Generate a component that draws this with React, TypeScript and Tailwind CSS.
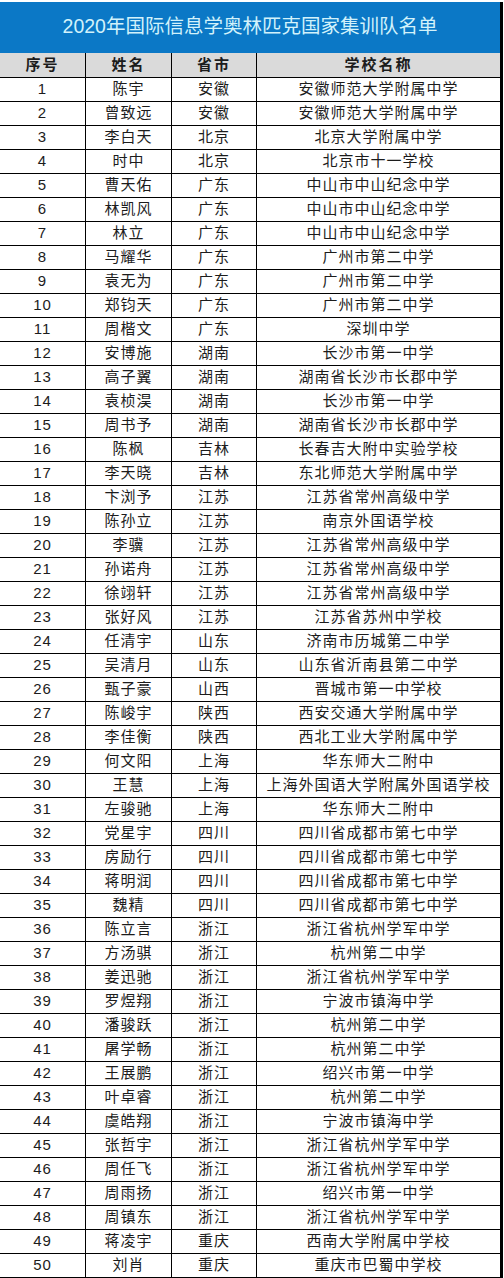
import type React from 'react'

// Roster rows: [no, name, province, school]
const ROWS: [number, string, string, string][] = [
	[1, '陈宇', '安徽', '安徽师范大学附属中学'],
	[2, '曾致远', '安徽', '安徽师范大学附属中学'],
	[3, '李白天', '北京', '北京大学附属中学'],
	[4, '时中', '北京', '北京市十一学校'],
	[5, '曹天佑', '广东', '中山市中山纪念中学'],
	[6, '林凯风', '广东', '中山市中山纪念中学'],
	[7, '林立', '广东', '中山市中山纪念中学'],
	[8, '马耀华', '广东', '广州市第二中学'],
	[9, '袁无为', '广东', '广州市第二中学'],
	[10, '郑钧天', '广东', '广州市第二中学'],
	[11, '周楷文', '广东', '深圳中学'],
	[12, '安博施', '湖南', '长沙市第一中学'],
	[13, '高子翼', '湖南', '湖南省长沙市长郡中学'],
	[14, '袁桢淏', '湖南', '长沙市第一中学'],
	[15, '周书予', '湖南', '湖南省长沙市长郡中学'],
	[16, '陈枫', '吉林', '长春吉大附中实验学校'],
	[17, '李天晓', '吉林', '东北师范大学附属中学'],
	[18, '卞浏予', '江苏', '江苏省常州高级中学'],
	[19, '陈孙立', '江苏', '南京外国语学校'],
	[20, '李骥', '江苏', '江苏省常州高级中学'],
	[21, '孙诺舟', '江苏', '江苏省常州高级中学'],
	[22, '徐翊轩', '江苏', '江苏省常州高级中学'],
	[23, '张好风', '江苏', '江苏省苏州中学校'],
	[24, '任清宇', '山东', '济南市历城第二中学'],
	[25, '吴清月', '山东', '山东省沂南县第二中学'],
	[26, '甄子豪', '山西', '晋城市第一中学校'],
	[27, '陈峻宇', '陕西', '西安交通大学附属中学'],
	[28, '李佳衡', '陕西', '西北工业大学附属中学'],
	[29, '何文阳', '上海', '华东师大二附中'],
	[30, '王慧', '上海', '上海外国语大学附属外国语学校'],
	[31, '左骏驰', '上海', '华东师大二附中'],
	[32, '党星宇', '四川', '四川省成都市第七中学'],
	[33, '房励行', '四川', '四川省成都市第七中学'],
	[34, '蒋明润', '四川', '四川省成都市第七中学'],
	[35, '魏精', '四川', '四川省成都市第七中学'],
	[36, '陈立言', '浙江', '浙江省杭州学军中学'],
	[37, '方汤骐', '浙江', '杭州第二中学'],
	[38, '姜迅驰', '浙江', '浙江省杭州学军中学'],
	[39, '罗煜翔', '浙江', '宁波市镇海中学'],
	[40, '潘骏跃', '浙江', '杭州第二中学'],
	[41, '屠学畅', '浙江', '杭州第二中学'],
	[42, '王展鹏', '浙江', '绍兴市第一中学'],
	[43, '叶卓睿', '浙江', '杭州第二中学'],
	[44, '虞皓翔', '浙江', '宁波市镇海中学'],
	[45, '张哲宇', '浙江', '浙江省杭州学军中学'],
	[46, '周任飞', '浙江', '浙江省杭州学军中学'],
	[47, '周雨扬', '浙江', '绍兴市第一中学'],
	[48, '周镇东', '浙江', '浙江省杭州学军中学'],
	[49, '蒋凌宇', '重庆', '西南大学附属中学校'],
	[50, '刘肖', '重庆', '重庆市巴蜀中学校'],
]

const GRID = 'grid grid-cols-[86px_86px_85px_243px]'
const CELL = 'flex items-center justify-center border-r border-black'

function App(): React.ReactElement {
	return (
		<div className="w-[504px] h-[1278px] bg-white pt-[2px] font-['Liberation_Sans','Noto_Sans_CJK_SC',sans-serif] text-[#1c1c1c]">
			<div className="w-[503px] border-r-[3px] border-black">
				<div className="h-[51px] bg-[#0b78c6] flex items-center justify-center text-[19.5px] text-[#d2f2fb] pb-[2px]">
					2020年国际信息学奥林匹克国家集训队名单
				</div>
				<div className={`${GRID} h-[25px] bg-[#dadada] border-b border-black text-[15px] font-bold tracking-[2px]`}>
					<div className={CELL}>序号</div>
					<div className={CELL}>姓名</div>
					<div className={CELL}>省市</div>
					<div className="flex items-center justify-center">学校名称</div>
				</div>
				{ROWS.map(([no, name, prov, school]) => (
					<div
						key={no}
						className={`${GRID} h-[24px] border-b border-black text-[15px] tracking-[1px]`}
					>
						<div className={CELL}>{no}</div>
						<div className={CELL}>{name}</div>
						<div className={CELL}>{prov}</div>
						<div className="flex items-center justify-center">{school}</div>
					</div>
				))}
			</div>
		</div>
	)
}

export default App
